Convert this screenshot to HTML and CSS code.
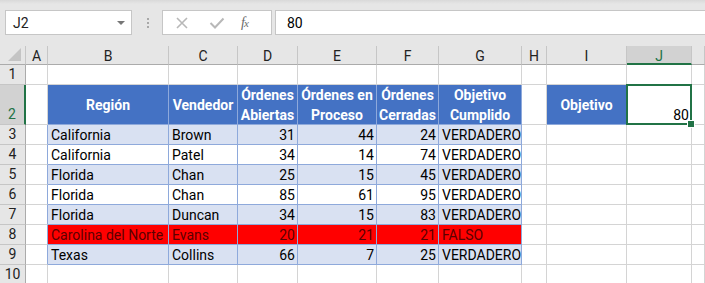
FILE: index.html
```html
<!DOCTYPE html>
<html lang="es">
<head>
  <meta charset="UTF-8">
  <title>Objetivo cumplido</title>
  <link rel="stylesheet" href="styles.css">
</head>
<body>
  <div class="toolbar">
    <div class="namebox">J2<span class="caret"></span></div>
    <div class="grip"><i></i><i></i><i></i></div>
    <div class="fxbox">
      <svg class="ico" width="14" height="14" viewBox="0 0 14 14"><path d="M2 2 L12 12 M12 2 L2 12" stroke="#b8b8b8" stroke-width="1.6" fill="none"/></svg>
      <svg class="ico" width="16" height="14" viewBox="0 0 16 14"><path d="M1.5 7 L6 11.5 L14.5 2.5" stroke="#b8b8b8" stroke-width="2" fill="none"/></svg>
      <span class="fx">f<sub>x</sub></span>
    </div>
    <div class="formula">80</div>
  </div>

  <div class="sheet">
    <div class="row">
      <div class="corner"></div>
      <div class="ch">A</div><div class="ch">B</div><div class="ch">C</div><div class="ch">D</div><div class="ch">E</div>
      <div class="ch">F</div><div class="ch">G</div><div class="ch">H</div><div class="ch">I</div><div class="ch sel">J</div><div class="ch"></div>
    </div>
    <div class="row">
      <div class="rh">1</div>
      <div class="c"></div><div class="c"></div><div class="c"></div><div class="c"></div><div class="c"></div>
      <div class="c"></div><div class="c"></div><div class="c"></div><div class="c"></div><div class="c"></div><div class="c"></div>
    </div>
    <div class="row">
      <div class="rh sel">2</div>
      <div class="c"></div>
      <div class="c th">Región</div>
      <div class="c th">Vendedor</div>
      <div class="c th">Órdenes Abiertas</div>
      <div class="c th">Órdenes en Proceso</div>
      <div class="c th">Órdenes Cerradas</div>
      <div class="c th">Objetivo Cumplido</div>
      <div class="c"></div>
      <div class="c th">Objetivo</div>
      <div class="c n active">80</div>
      <div class="c"></div>
    </div>
    <div class="row alt">
      <div class="rh">3</div>
      <div class="c eb"></div>
      <div class="c t">California</div><div class="c t">Brown</div>
      <div class="c t n">31</div><div class="c t n">44</div><div class="c t n">24</div>
      <div class="c t">VERDADERO</div>
      <div class="c"></div><div class="c"></div><div class="c"></div><div class="c"></div>
    </div>
    <div class="row">
      <div class="rh">4</div>
      <div class="c eb"></div>
      <div class="c t">California</div><div class="c t">Patel</div>
      <div class="c t n">34</div><div class="c t n">14</div><div class="c t n">74</div>
      <div class="c t">VERDADERO</div>
      <div class="c"></div><div class="c"></div><div class="c"></div><div class="c"></div>
    </div>
    <div class="row alt">
      <div class="rh">5</div>
      <div class="c eb"></div>
      <div class="c t">Florida</div><div class="c t">Chan</div>
      <div class="c t n">25</div><div class="c t n">15</div><div class="c t n">45</div>
      <div class="c t">VERDADERO</div>
      <div class="c"></div><div class="c"></div><div class="c"></div><div class="c"></div>
    </div>
    <div class="row">
      <div class="rh">6</div>
      <div class="c eb"></div>
      <div class="c t">Florida</div><div class="c t">Chan</div>
      <div class="c t n">85</div><div class="c t n">61</div><div class="c t n">95</div>
      <div class="c t">VERDADERO</div>
      <div class="c"></div><div class="c"></div><div class="c"></div><div class="c"></div>
    </div>
    <div class="row alt">
      <div class="rh">7</div>
      <div class="c eb"></div>
      <div class="c t">Florida</div><div class="c t">Duncan</div>
      <div class="c t n">34</div><div class="c t n">15</div><div class="c t n">83</div>
      <div class="c t">VERDADERO</div>
      <div class="c"></div><div class="c"></div><div class="c"></div><div class="c"></div>
    </div>
    <div class="row miss">
      <div class="rh">8</div>
      <div class="c eb"></div>
      <div class="c t">Carolina del Norte</div><div class="c t">Evans</div>
      <div class="c t n">20</div><div class="c t n">21</div><div class="c t n">21</div>
      <div class="c t">FALSO</div>
      <div class="c"></div><div class="c"></div><div class="c"></div><div class="c"></div>
    </div>
    <div class="row alt">
      <div class="rh">9</div>
      <div class="c eb"></div>
      <div class="c t">Texas</div><div class="c t">Collins</div>
      <div class="c t n">66</div><div class="c t n">7</div><div class="c t n">25</div>
      <div class="c t">VERDADERO</div>
      <div class="c"></div><div class="c"></div><div class="c"></div><div class="c"></div>
    </div>
    <div class="row">
      <div class="rh">10</div>
      <div class="c"></div><div class="c"></div><div class="c"></div><div class="c"></div><div class="c"></div>
      <div class="c"></div><div class="c"></div><div class="c"></div><div class="c"></div><div class="c"></div><div class="c"></div>
    </div>
  </div>
</body>
</html>
```

FILE: styles.css
```css
* {
  box-sizing: border-box;
}

html, body {
  margin: 0;
  height: 100%;
  overflow: hidden;
}

body {
  background: #fff;
  font: 14px/1 Roboto, Lato, sans-serif;
  color: #000;
}

/* formula bar */
.toolbar {
  display: flex;
  align-items: flex-start;
  height: 46px;
  padding: 10px 0 0 5px;
  background: linear-gradient(#d9d9d9, #e6e6e6 4px);
}

.namebox {
  position: relative;
  width: 127px;
  height: 25px;
  padding: 5px 0 0 7px;
  background: #fff;
  border: 1px solid #c6c6c6;
  font-size: 14px;
  color: #222;
}
.caret {
  position: absolute;
  top: 10px;
  right: 6px;
  border: 4px solid transparent;
  border-top: 4px solid #777;
  border-width: 4px 4px 0;
}

.grip {
  display: flex;
  flex-direction: column;
  gap: 2px;
  margin: 8px 0 0 15px;
  width: 16px;
}
.grip i {
  width: 2px;
  height: 2px;
  background: #a8a8a8;
}

.fxbox {
  display: flex;
  align-items: center;
  width: 110px;
  height: 25px;
  margin-left: -1px;
  padding: 0 0 0 12px;
  background: #fff;
  border: 1px solid #c6c6c6;
}
.fxbox .ico {
  margin-right: 20px;
}
.fxbox .ico + .ico {
  margin-right: 16px;
}
.fx {
  font: italic 14px "Liberation Serif", serif;
  color: #6a6a6a;
}
.fx sub {
  font-size: 11px;
  vertical-align: 0;
  margin-left: -1px;
}

.formula {
  flex: 1;
  height: 25px;
  margin-left: 3px;
  padding: 5px 0 0 11px;
  background: #fff;
  border: 1px solid #c6c6c6;
  border-right: 0;
  font-size: 14px;
}

/* worksheet grid */
.sheet {
  display: grid;
  grid-template-columns: 26px 22px 121px 69px 60px 79px 62px 83px 25px 80px 65px 1fr;
  grid-template-rows: 19px 20px 40px repeat(8, 20px);
}

.row {
  display: contents;
}

.corner {
  position: relative;
  background: #e6e6e6;
  border-right: 1px solid #c6c6c6;
  border-bottom: 1px solid #ababab;
}
.corner::after {
  content: "";
  position: absolute;
  right: 4px;
  bottom: 3px;
  border-left: 13px solid transparent;
  border-bottom: 13px solid #c4c4c4;
}

.ch {
  display: flex;
  align-items: center;
  justify-content: center;
  padding-top: 2px;
  background: #e6e6e6;
  border-right: 1px solid #c6c6c6;
  border-bottom: 1px solid #ababab;
  color: #222;
}
.ch.sel {
  background: #d2d2d2;
  border-bottom: 2px solid #217346;
  color: #217346;
}

.rh {
  display: flex;
  align-items: flex-end;
  justify-content: center;
  padding-bottom: 3px;
  background: #e6e6e6;
  border-right: 1px solid #ababab;
  border-bottom: 1px solid #c6c6c6;
  color: #222;
}
.rh.sel {
  background: #d2d2d2;
  border-right: 2px solid #217346;
  color: #217346;
}

.c {
  display: flex;
  align-items: flex-end;
  padding: 0 2px 2px 3px;
  border-right: 1px solid #d4d4d4;
  border-bottom: 1px solid #d4d4d4;
  white-space: nowrap;
}
.c.n {
  justify-content: flex-end;
}

.c.th {
  align-items: center;
  justify-content: center;
  padding: 1px 2px 0;
  background: #4472c4;
  border-color: #8ea9db;
  color: #fff;
  font-weight: bold;
  white-space: normal;
  text-align: center;
  line-height: 20px;
}

.c.t {
  border-color: #8ea9db;
}
.c.eb {
  border-right-color: #8ea9db;
}
.alt .t {
  background: #d9e1f2;
}
.miss .t {
  background: #ff0000;
  color: #5a0000;
}

/* active cell */
.c.active {
  position: relative;
}
.c.active::before {
  content: "";
  position: absolute;
  inset: -1px -1px -1px -1px;
  border: 2px solid #217346;
}
.c.active::after {
  content: "";
  position: absolute;
  right: -4px;
  bottom: -4px;
  width: 6px;
  height: 6px;
  background: #217346;
  border: 1px solid #fff;
}
```
